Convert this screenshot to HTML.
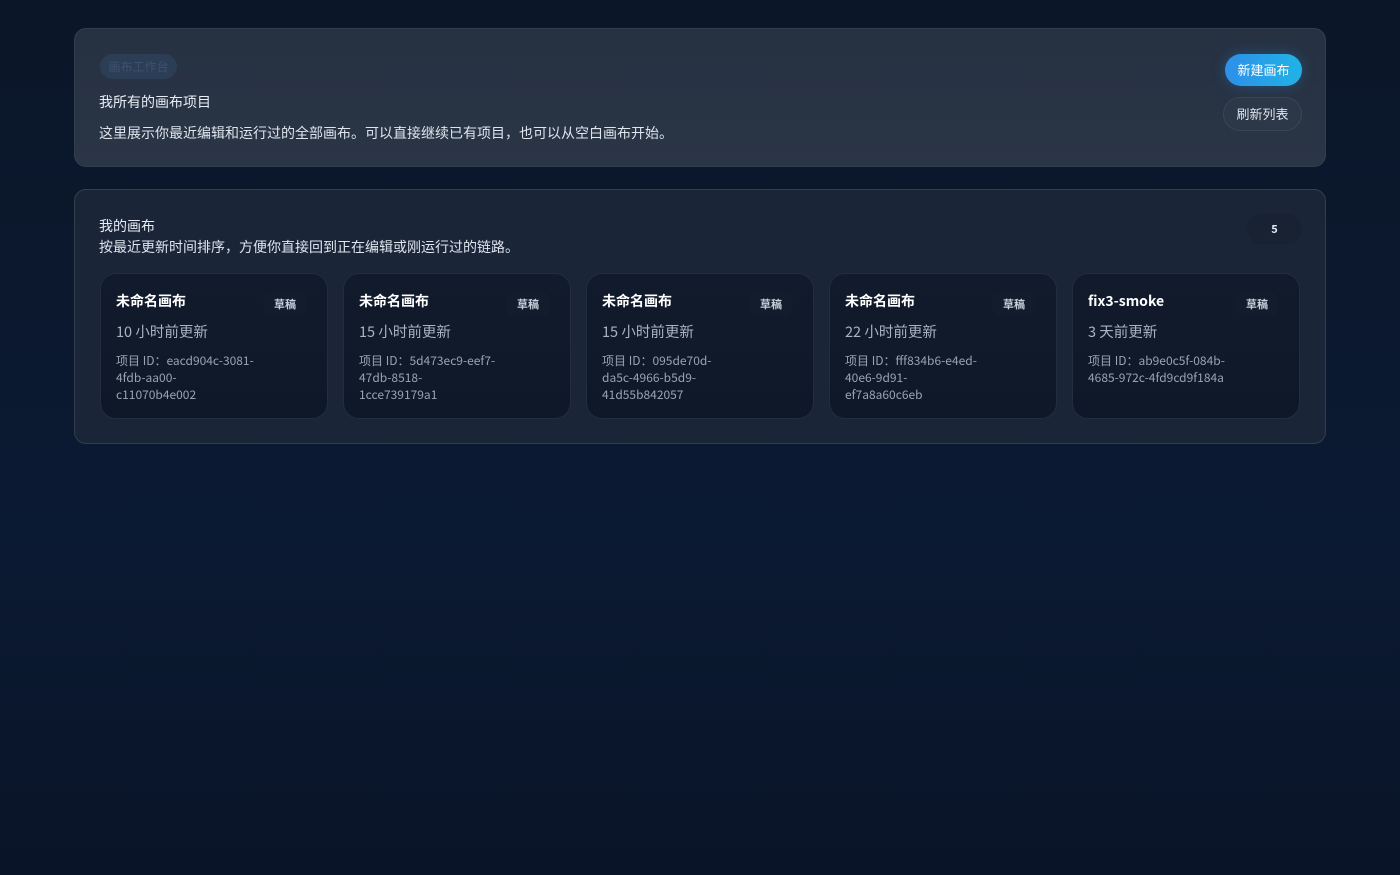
<!DOCTYPE html>
<html><head><meta charset="utf-8"><style>
*{box-sizing:border-box;margin:0;padding:0}
body{width:1400px;height:875px;overflow:hidden;background:linear-gradient(180deg,#0b1628 0%,#0b1a33 60%,#0a1428 100%);font-family:"Noto Sans CJK SC","Liberation Sans",sans-serif;color:#e8edf5}
.panel{position:absolute;left:74px;width:1252px;border:1px solid #323e50;border-radius:12px}
.p1{top:28px;height:139px;background:linear-gradient(180deg,#263142,#2a3546)}
.p2{top:189px;height:255px;background:#1a2538}
.tag{position:absolute;left:25px;top:25px;width:77px;height:25px;border-radius:13px;background:#2c3d56;color:#3e5270;font-size:12px;line-height:25px;text-align:center}
.t1{position:absolute;left:24px;top:63px;font-size:14px;line-height:20px}
.t2{position:absolute;left:24px;top:94px;font-size:14px;line-height:20px;color:#dfe5ee}
.b1{position:absolute;left:1150px;top:25px;width:77px;height:32px;border-radius:16px;background:linear-gradient(90deg,#2e8fe8,#20b3e6);color:#fff;font-size:13px;line-height:32px;text-align:center;box-shadow:0 0 14px rgba(40,150,230,.3)}
.b2{position:absolute;left:1148px;top:68px;width:79px;height:34px;border-radius:17px;background:#2c3747;border:1px solid #3a4556;color:#dfe5ee;font-size:13px;line-height:32px;text-align:center}
.h1{position:absolute;left:24px;top:26px;font-size:14px;line-height:20px}
.h2{position:absolute;left:24px;top:47px;font-size:14px;line-height:20px;color:#dfe5ee}
.cnt{position:absolute;left:1172px;top:24px;width:55px;height:30px;border-radius:15px;background:#182233;font-size:11px;font-weight:bold;line-height:30px;text-align:center}
.card{position:absolute;top:83px;width:228px;height:146px;border-radius:16px;background:linear-gradient(180deg,#111b2b,#0e1828);border:1px solid #222d3e;padding:17px 15px}
.ct{font-size:14px;font-weight:bold;color:#fff;line-height:20px}
.dr{position:absolute;left:162px;top:18px;width:44px;height:24px;font-size:11px;font-weight:bold;color:#c7cfdb;text-align:center;line-height:24px;background:#121c2c;border-radius:8px}
.cu{margin-top:10px;font-size:14.5px;line-height:22px;color:#a9b3c2}
.ci{margin-top:9px;font-size:12px;line-height:17px;color:#98a3b3;white-space:nowrap}
</style></head><body>
<div class="panel p1">
<div class="tag">画布工作台</div>
<div class="t1">我所有的画布项目</div>
<div class="t2">这里展示你最近编辑和运行过的全部画布。可以直接继续已有项目，也可以从空白画布开始。</div>
<div class="b1">新建画布</div>
<div class="b2">刷新列表</div>
</div>
<div class="panel p2">
<div class="h1">我的画布</div>
<div class="h2">按最近更新时间排序，方便你直接回到正在编辑或刚运行过的链路。</div>
<div class="cnt">5</div>
<div class="card" style="left:25px"><div class="ct">未命名画布</div><div class="dr">草稿</div><div class="cu">10 小时前更新</div><div class="ci">项目 ID：eacd904c-3081-<br>4fdb-aa00-<br>c11070b4e002</div></div>
<div class="card" style="left:268px"><div class="ct">未命名画布</div><div class="dr">草稿</div><div class="cu">15 小时前更新</div><div class="ci">项目 ID：5d473ec9-eef7-<br>47db-8518-<br>1cce739179a1</div></div>
<div class="card" style="left:511px"><div class="ct">未命名画布</div><div class="dr">草稿</div><div class="cu">15 小时前更新</div><div class="ci">项目 ID：095de70d-<br>da5c-4966-b5d9-<br>41d55b842057</div></div>
<div class="card" style="left:754px"><div class="ct">未命名画布</div><div class="dr">草稿</div><div class="cu">22 小时前更新</div><div class="ci">项目 ID：fff834b6-e4ed-<br>40e6-9d91-<br>ef7a8a60c6eb</div></div>
<div class="card" style="left:997px"><div class="ct">fix3-smoke</div><div class="dr">草稿</div><div class="cu">3 天前更新</div><div class="ci">项目 ID：ab9e0c5f-084b-<br>4685-972c-4fd9cd9f184a</div></div>
</div>
</body></html>
